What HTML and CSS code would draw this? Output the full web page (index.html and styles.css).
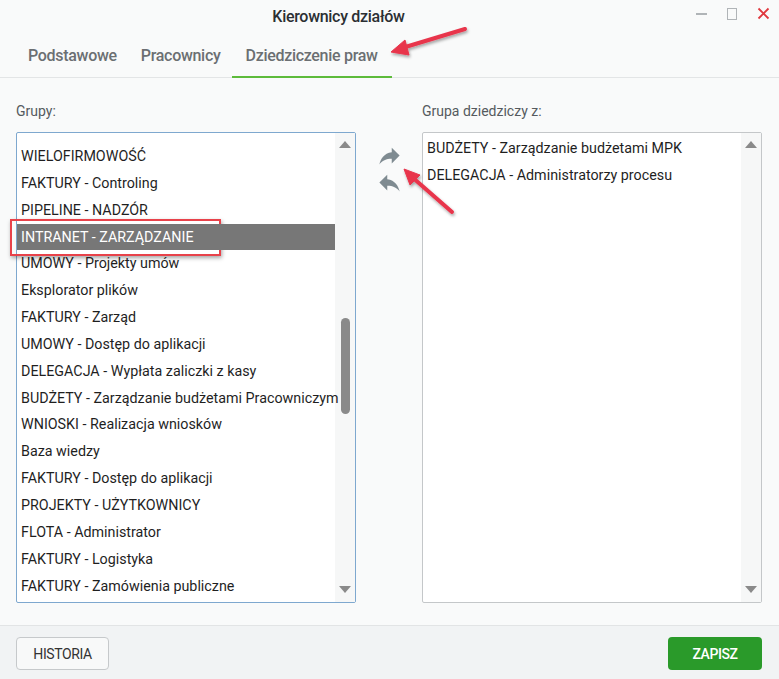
FILE: index.html
```html
<!DOCTYPE html>
<html lang="pl">
<head>
  <meta charset="UTF-8">
  <title>Kierownicy działów</title>
  <link rel="stylesheet" href="styles.css">
</head>
<body>

  <div class="window">
    <div class="titlebar">
      <span class="title">Kierownicy działów</span>
      <div class="controls">
        <span class="ctl-min"></span>
        <span class="ctl-max"></span>
        <svg class="ctl-close" width="13" height="13" viewBox="0 0 13 13">
          <path d="M1.5 1.5 L11.5 11.5 M11.5 1.5 L1.5 11.5" stroke="#e0383e" stroke-width="1.8"/>
        </svg>
      </div>
    </div>

    <div class="tabs">
      <div class="tab">Podstawowe</div>
      <div class="tab">Pracownicy</div>
      <div class="tab active">Dziedziczenie praw</div>
    </div>

    <div class="content">
      <div class="column">
        <div class="label">Grupy:</div>
        <div class="listbox focused">
          <ul class="items">
            <li>WIELOFIRMOWOŚĆ</li>
            <li>FAKTURY - Controling</li>
            <li>PIPELINE - NADZÓR</li>
            <li class="selected">INTRANET - ZARZĄDZANIE</li>
            <li>UMOWY - Projekty umów</li>
            <li>Eksplorator plików</li>
            <li>FAKTURY - Zarząd</li>
            <li>UMOWY - Dostęp do aplikacji</li>
            <li>DELEGACJA - Wypłata zaliczki z kasy</li>
            <li>BUDŻETY - Zarządzanie budżetami Pracowniczym</li>
            <li>WNIOSKI - Realizacja wniosków</li>
            <li>Baza wiedzy</li>
            <li>FAKTURY - Dostęp do aplikacji</li>
            <li>PROJEKTY - UŻYTKOWNICY</li>
            <li>FLOTA - Administrator</li>
            <li>FAKTURY - Logistyka</li>
            <li>FAKTURY - Zamówienia publiczne</li>
          </ul>
          <div class="scrollbar">
            <span class="arrow-up"></span>
            <span class="thumb"></span>
            <span class="arrow-down"></span>
          </div>
        </div>
      </div>

      <div class="mover">
        <svg class="move-icon" width="27" height="27" viewBox="0 0 24 24">
          <path d="M14 9V5l7 7-7 7v-4.1c-5 0-8.5 1.6-11 5.1 1-5 4-10 11-11z" fill="#7f8b91"/>
        </svg>
        <svg class="move-icon" width="27" height="27" viewBox="0 0 24 24">
          <path d="M10 9V5l-7 7 7 7v-4.1c5 0 8.5 1.6 11 5.1-1-5-4-10-11-11z" fill="#7f8b91"/>
        </svg>
      </div>

      <div class="column">
        <div class="label">Grupa dziedziczy z:</div>
        <div class="listbox">
          <ul class="items short">
            <li>BUDŻETY - Zarządzanie budżetami MPK</li>
            <li>DELEGACJA - Administratorzy procesu</li>
          </ul>
          <div class="scrollbar">
            <span class="arrow-up"></span>
            <span class="thumb hidden"></span>
            <span class="arrow-down"></span>
          </div>
        </div>
      </div>
    </div>

    <div class="footer">
      <button class="btn btn-light">HISTORIA</button>
      <button class="btn btn-green">ZAPISZ</button>
    </div>
  </div>

  <!-- annotations drawn over the screenshot -->
  <div class="mark-box"></div>
  <svg class="marks" width="779" height="679" viewBox="0 0 779 679">
    <defs>
      <filter id="shadow" x="-20%" y="-20%" width="140%" height="140%">
        <feDropShadow dx="1" dy="2" stdDeviation="1.5" flood-color="#000" flood-opacity="0.35"/>
      </filter>
    </defs>
    <g fill="#e8354c" stroke="#e8354c" filter="url(#shadow)">
      <line x1="465" y1="29" x2="402" y2="48" stroke-width="4" stroke-linecap="round"/>
      <polygon points="391,52 405,40 409,55" stroke-width="1" stroke-linejoin="round"/>
      <line x1="452" y1="212" x2="412" y2="177" stroke-width="4" stroke-linecap="round"/>
      <polygon points="404,169 420,175 410,185" stroke-width="1" stroke-linejoin="round"/>
    </g>
  </svg>

</body>
</html>
```

FILE: styles.css
```css
body {
  margin: 0;
  font-family: Roboto, "Liberation Sans", sans-serif;
  background-color: #f9fafa;
  color: #1f1f1f;
}

.window {
  width: 779px;
  height: 679px;
  display: flex;
  flex-direction: column;
}

.titlebar {
  height: 33px;
  display: flex;
  align-items: center;
  justify-content: center;
  padding-right: 102px;
  position: relative;
}

.title {
  font-size: 16px;
  font-weight: 500;
  color: #2b2f33;
  letter-spacing: -0.3px;
}

.controls {
  position: absolute;
  right: 9px;
  top: 7px;
  display: flex;
  align-items: center;
  gap: 20px;
}

.ctl-min {
  width: 11px;
  height: 2px;
  background-color: #b0b4b7;
}

.ctl-max {
  width: 10px;
  height: 12px;
  border: 1px solid #b0b4b7;
  box-sizing: border-box;
}

.tabs {
  height: 45px;
  display: flex;
  align-items: stretch;
  padding-left: 16px;
  border-bottom: 1px solid #e3e5e6;
  box-sizing: border-box;
}

.tab {
  padding: 0 12px;
  display: flex;
  align-items: center;
  font-size: 16px;
  font-weight: 500;
  color: #6b6f72;
  letter-spacing: -0.3px;
  border-bottom: 2px solid transparent;
  margin-bottom: -1px;
  padding-top: 1px;
}

.tab.active {
  border-bottom-color: #5dbb3b;
  padding-left: 13px;
  padding-right: 14px;
}

.content {
  flex: 1;
  display: flex;
  padding: 0 17px 22px 16px;
}

.column {
  width: 340px;
  display: flex;
  flex-direction: column;
}

.label {
  font-size: 14px;
  color: #555a5e;
  height: 54px;
  display: flex;
  align-items: center;
  padding-top: 11px;
  box-sizing: border-box;
}

.listbox {
  flex: 1;
  display: flex;
  background-color: #fff;
  border: 1px solid #c4c7c9;
  border-radius: 2px;
}

.listbox.focused {
  border-color: #7ea8cf;
}

.items {
  list-style: none;
  margin: 0;
  padding: 10px 0 0 0;
  flex: 1;
  min-width: 0;
  position: relative;
  z-index: 1;
}

.items.short {
  padding-top: 2px;
}

.items li {
  height: 26.85px;
  line-height: 26.85px;
  padding-left: 4px;
  font-size: 14.3px;
  white-space: nowrap;
}

.items li.selected {
  background-color: #777;
  color: #fff;
}

.scrollbar {
  width: 20px;
  background-color: #f6f7f7;
  display: flex;
  flex-direction: column;
  align-items: center;
  padding: 8px 0 9px 0;
  box-sizing: border-box;
}

.arrow-up {
  width: 0;
  height: 0;
  border-left: 6px solid transparent;
  border-right: 6px solid transparent;
  border-bottom: 7px solid #8a8a8a;
  margin-bottom: 170px;
}

.arrow-down {
  width: 0;
  height: 0;
  border-left: 6px solid transparent;
  border-right: 6px solid transparent;
  border-top: 7px solid #8a8a8a;
  margin-top: auto;
}

.thumb {
  width: 9px;
  height: 96px;
  border-radius: 5px;
  background-color: #8a8a8a;
}

.thumb.hidden {
  visibility: hidden;
}

.mover {
  width: 66px;
  display: flex;
  flex-direction: column;
  align-items: center;
  padding-top: 64px;
  gap: 0;
}

.footer {
  height: 54px;
  border-top: 1px solid #e2e4e5;
  background-color: #f1f3f4;
  display: flex;
  justify-content: space-between;
  align-items: flex-start;
  padding: 11px 17px 0 16px;
  box-sizing: border-box;
}

.btn {
  height: 33px;
  border-radius: 4px;
  font-family: Roboto, "Liberation Sans", sans-serif;
  font-size: 14px;
  font-weight: 400;
  letter-spacing: -0.4px;
  cursor: pointer;
}

.btn-light {
  width: 93px;
  background-color: #f8f9f9;
  border: 1px solid #c6c9cb;
  color: #333;
}

.btn-green {
  width: 94px;
  background-color: #2a9a2a;
  border: none;
  color: #fff;
  font-weight: 500;
}

.mark-box {
  position: absolute;
  left: 10px;
  top: 219px;
  width: 207px;
  height: 33px;
  border: 2px solid #e8424a;
  box-shadow: 1px 2px 4px rgba(0, 0, 0, 0.35);
}

.marks {
  position: absolute;
  left: 0;
  top: 0;
  pointer-events: none;
}
```
